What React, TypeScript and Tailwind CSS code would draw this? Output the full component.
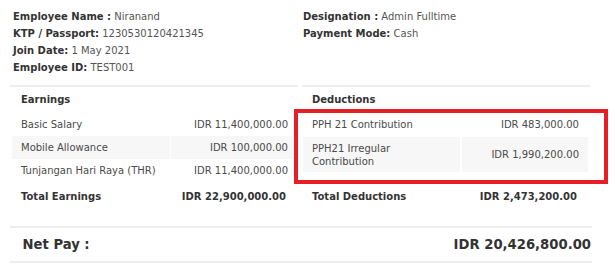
import React from "react";

type Line = { name: string; amount: string; tall?: boolean };

const earnings: Line[] = [
  { name: "Basic Salary", amount: "IDR 11,400,000.00" },
  { name: "Mobile Allowance", amount: "IDR 100,000.00" },
  { name: "Tunjangan Hari Raya (THR)", amount: "IDR 11,400,000.00" },
];

const deductions: Line[] = [
  { name: "PPH 21 Contribution", amount: "IDR 483,000.00" },
  { name: "PPH21 Irregular Contribution", amount: "IDR 1,990,200.00", tall: true },
];

function Field({ label, value }: { label: string; value: string }) {
  return (
    <div className="whitespace-nowrap">
      <span className="font-bold text-[#333]">{label}</span>{" "}
      <span className="text-[#555]">{value}</span>
    </div>
  );
}

export default function App() {
  return (
    <div className="relative w-[615px] h-[270px] overflow-hidden bg-white font-['DejaVu_Sans',sans-serif] text-[10px] text-[#4a4a4a]">
      {/* employee details */}
      <div className="grid grid-cols-[290px_1fr] pl-[13px] pt-[7.5px] leading-[17px]">
        <div>
          <Field label="Employee Name :" value="Niranand" />
          <Field label="KTP / Passport:" value="1230530120421345" />
          <Field label="Join Date:" value="1 May 2021" />
          <Field label="Employee ID:" value="TEST001" />
        </div>
        <div>
          <Field label="Designation :" value="Admin Fulltime" />
          <Field label="Payment Mode:" value="Cash" />
        </div>
      </div>

      {/* earnings / deductions */}
      <div className="mt-[9.5px] ml-[10px] w-[580px] grid grid-cols-2 gap-x-[4px] gap-y-[2px]">
        <div className="border-t-2 border-[#eeeeee] pl-[2px] pr-[5px]">
          <div className="h-[25px] flex items-center pl-[9px] font-bold text-[#333]">Earnings</div>
          {earnings.map((e, i) => (
            <div
              key={e.name}
              className={`grid grid-cols-[157.5px_1fr] gap-x-[1.5px] ${i === 0 ? "h-[24px]" : "h-[23px]"}`}
            >
              <div className={`flex items-center pl-[9px] ${i === 1 ? "bg-[#f7f7f7]" : ""}`}>{e.name}</div>
              <div className={`flex items-center justify-end pr-[5px] ${i === 1 ? "bg-[#f7f7f7]" : ""}`}>{e.amount}</div>
            </div>
          ))}
        </div>
        <div className="border-t-2 border-[#eeeeee] pl-[1px] pr-[2px]">
          <div className="h-[25px] flex items-center pl-[9px] font-bold text-[#333]">Deductions</div>
          {deductions.map((d, i) => (
            <div
              key={d.name}
              className={`grid grid-cols-[157px_1fr] gap-x-[1.5px] ${d.tall ? "h-[35px]" : "h-[25px]"}`}
            >
              <div className={`flex items-center pl-[9px] pr-[40px] leading-[13px] ${i === 1 ? "bg-[#f7f7f7]" : ""}`}>{d.name}</div>
              <div className={`flex items-center justify-end pr-[9px] ${i === 1 ? "bg-[#f7f7f7]" : ""}`}>{d.amount}</div>
            </div>
          ))}
        </div>

        <div className="h-[24px] flex items-center justify-between pl-[11px] pr-[12px] font-bold text-[#333]">
          <span>Total Earnings</span>
          <span>IDR 22,900,000.00</span>
        </div>
        <div className="h-[24px] flex items-center justify-between pl-[10px] pr-[13px] font-bold text-[#333]">
          <span>Total Deductions</span>
          <span>IDR 2,473,200.00</span>
        </div>
      </div>

      {/* net pay */}
      <div className="mt-[18px] ml-[10px] w-[582px] h-[37px] border-y-2 border-[#eeeeee] flex items-center justify-between pl-[12.5px] pr-[1px] font-bold text-[13.2px] text-[#333]">
        <span>Net Pay :</span>
        <span>IDR 20,426,800.00</span>
      </div>

      {/* highlight box around the deduction lines */}
      <div className="absolute left-[293.5px] top-[108.5px] w-[314px] h-[75px] border-4 border-[#e61e25]" />
    </div>
  );
}
